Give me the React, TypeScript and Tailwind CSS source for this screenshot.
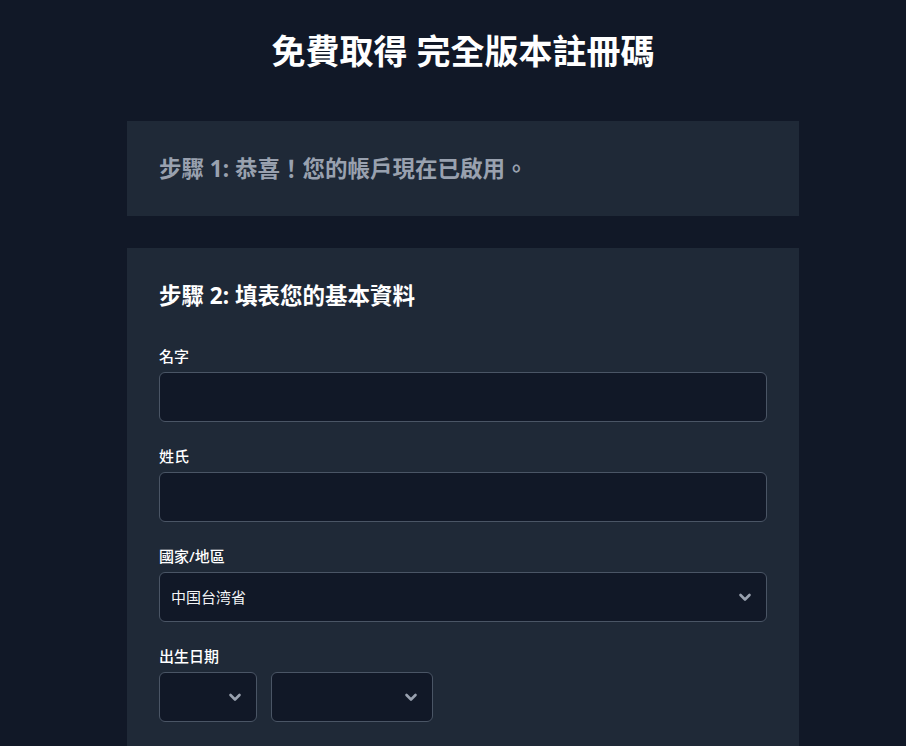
import { useState } from "react";

const FONT = { fontFamily: '"Noto Sans", "Noto Sans CJK TC", sans-serif' };

function Chevron() {
  return (
    <svg
      viewBox="0 0 16 16"
      className="pointer-events-none absolute right-[14px] top-1/2 h-4 w-4 -translate-y-1/2 text-gray-400"
      fill="none"
      stroke="currentColor"
      strokeWidth={2.6}
      strokeLinecap="round"
      strokeLinejoin="round"
    >
      <path d="M3.5 6l4.5 4.5L12.5 6" />
    </svg>
  );
}

function Field({ label, children }: { label: string; children: React.ReactNode }) {
  return (
    <div className="mb-6">
      <label className="mb-1.5 block text-[15px] font-medium leading-5 text-white">{label}</label>
      {children}
    </div>
  );
}

function TextInput() {
  const [value, setValue] = useState("");
  return (
    <input
      value={value}
      onChange={(e) => setValue(e.target.value)}
      className="block h-[50px] w-full rounded-md border border-gray-600 bg-[#111827] px-3 text-[15px] text-gray-100 outline-none focus:border-blue-500"
    />
  );
}

function Select({ value, className = "w-full" }: { value?: string; className?: string }) {
  return (
    <div className={`relative ${className}`}>
      <select
        defaultValue={value ?? ""}
        className="block h-[50px] w-full appearance-none rounded-md border border-gray-600 bg-[#111827] pl-[11px] pr-10 text-[15px] text-gray-100 outline-none"
      >
        {value ? <option>{value}</option> : <option value=""></option>}
      </select>
      <Chevron />
    </div>
  );
}

export default function App() {
  return (
    <div className="h-screen overflow-hidden bg-[#111827] pt-[29px] pl-5" style={FONT}>
      <h1 className="mb-[47px] text-center text-[34px] font-bold leading-[45px] text-white">
        免費取得 完全版本註冊碼
      </h1>

      <div className="mx-auto max-w-2xl">
        {/* Step 1 */}
        <div className="bg-[#1f2937] px-8 py-8">
          <h2 className="text-[22.5px] font-bold leading-[31px] text-gray-400">
            步驟 1: 恭喜！您的帳戶現在已啟用。
          </h2>
        </div>

        {/* Step 2 */}
        <div className="mt-8 bg-[#1f2937] px-8 pt-8 pb-10">
          <h2 className="mb-[35px] text-[22.5px] font-bold leading-[31px] text-white">
            步驟 2: 填表您的基本資料
          </h2>

          <Field label="名字">
            <TextInput />
          </Field>
          <Field label="姓氏">
            <TextInput />
          </Field>
          <Field label="國家/地區">
            <Select value="中国台湾省" />
          </Field>
          <Field label="出生日期">
            <div className="flex gap-[14px]">
              <Select className="w-[98px]" />
              <Select className="w-[162px]" />
            </div>
          </Field>
        </div>
      </div>
    </div>
  );
}
